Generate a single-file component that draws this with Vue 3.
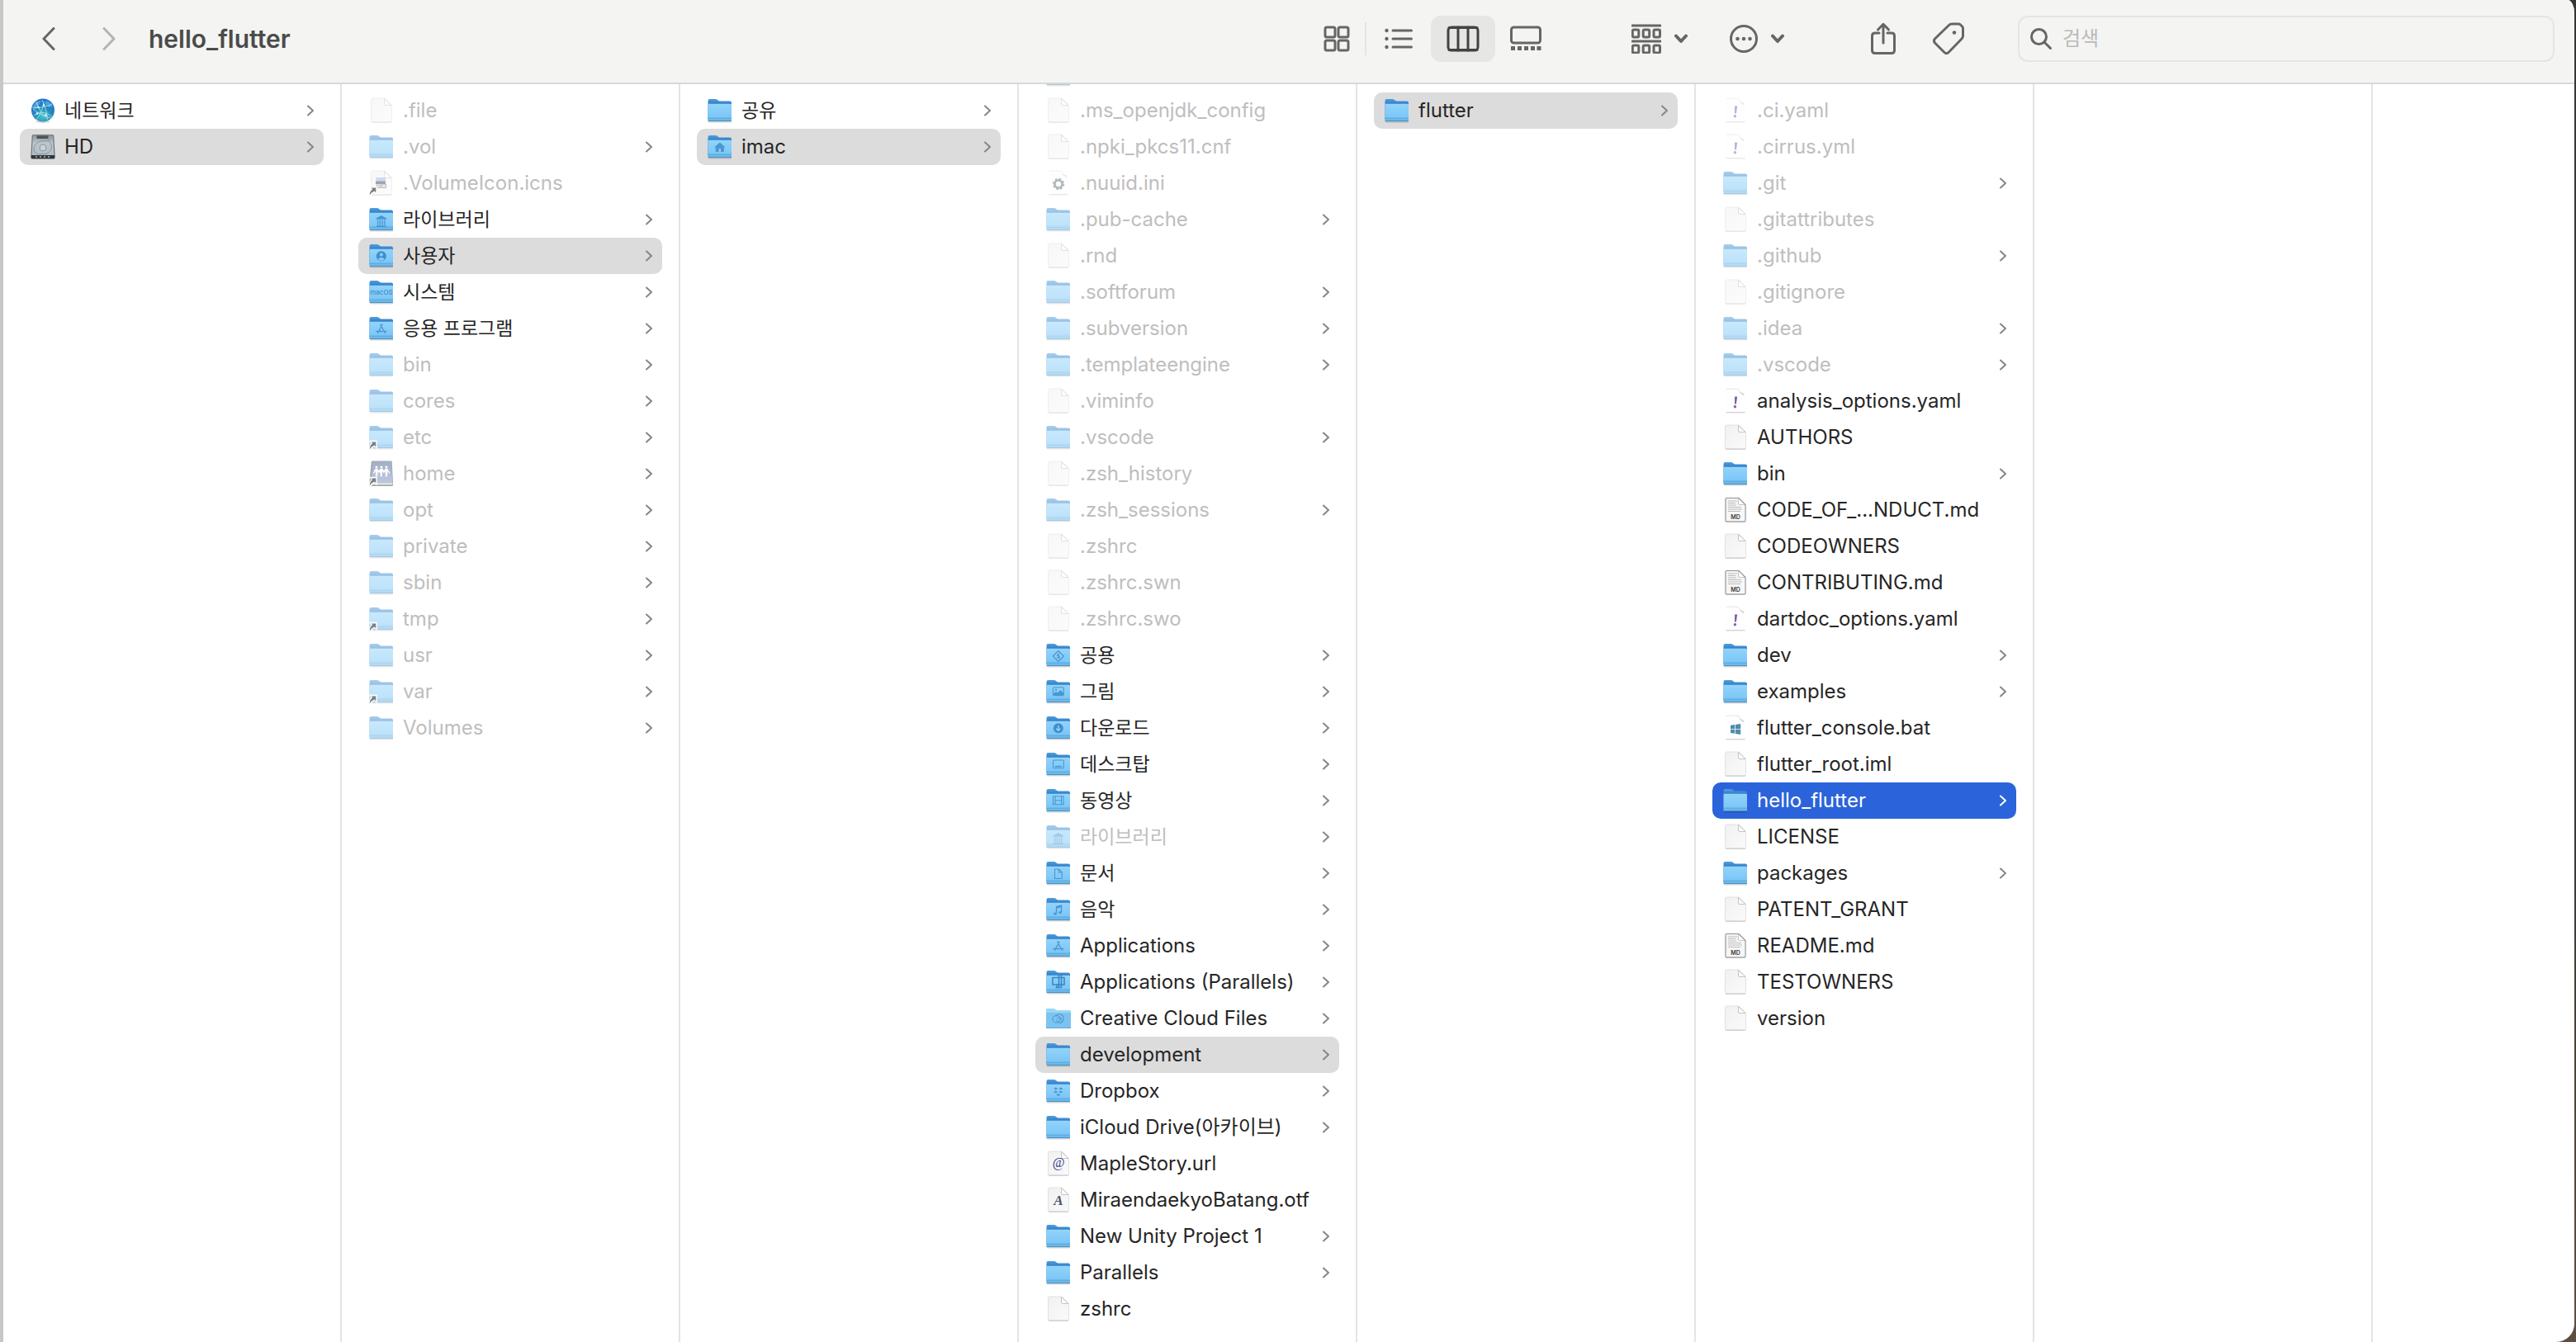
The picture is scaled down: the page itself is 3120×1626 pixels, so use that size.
<script setup>
const f = (name, extra = {}) => ({ name, icon: 'folder', nav: true, ...extra })
const d = (name, extra = {}) => ({ name, icon: 'doc', ...extra })
const dim = { dim: true }

const columns = [
  {
    items: [
      { name: '네트워크', icon: 'globe', nav: true },
      { name: 'HD', icon: 'disk', nav: true, state: 'open' },
    ],
  },
  {
    items: [
      d('.file', dim),
      f('.vol', dim),
      d('.VolumeIcon.icns', { dim: true, glyph: 'picture', alias: true }),
      f('라이브러리', { glyph: 'library' }),
      f('사용자', { glyph: 'user', state: 'open' }),
      f('시스템', { mark: 'macos' }),
      f('응용 프로그램', { glyph: 'apps' }),
      f('bin', dim),
      f('cores', dim),
      f('etc', { dim: true, alias: true }),
      { name: 'home', icon: 'server', nav: true, dim: true, alias: true },
      f('opt', dim),
      f('private', dim),
      f('sbin', dim),
      f('tmp', { dim: true, alias: true }),
      f('usr', dim),
      f('var', { dim: true, alias: true }),
      f('Volumes', dim),
    ],
  },
  {
    items: [f('공유'), f('imac', { glyph: 'house', state: 'open' })],
  },
  {
    scrolled: true,
    items: [
      f('', dim),
      d('.ms_openjdk_config', dim),
      d('.npki_pkcs11.cnf', dim),
      { name: '.nuuid.ini', icon: 'page', glyph: 'gear', dim: true },
      f('.pub-cache', dim),
      d('.rnd', dim),
      f('.softforum', dim),
      f('.subversion', dim),
      f('.templateengine', dim),
      d('.viminfo', dim),
      f('.vscode', dim),
      d('.zsh_history', dim),
      f('.zsh_sessions', dim),
      d('.zshrc', dim),
      d('.zshrc.swn', dim),
      d('.zshrc.swo', dim),
      f('공용', { glyph: 'public' }),
      f('그림', { glyph: 'pictures' }),
      f('다운로드', { glyph: 'download' }),
      f('데스크탑', { glyph: 'desktop' }),
      f('동영상', { glyph: 'movie' }),
      f('라이브러리', { glyph: 'library', dim: true }),
      f('문서', { glyph: 'document' }),
      f('음악', { glyph: 'music' }),
      f('Applications', { glyph: 'apps' }),
      f('Applications (Parallels)', { glyph: 'parallels' }),
      f('Creative Cloud Files', { icon: 'folderflat', glyph: 'cloud' }),
      f('development', { state: 'open' }),
      f('Dropbox', { glyph: 'dropbox' }),
      f('iCloud Drive(아카이브)'),
      d('MapleStory.url', { mark: 'at' }),
      d('MiraendaekyoBatang.otf', { mark: 'font' }),
      f('New Unity Project 1'),
      f('Parallels'),
      d('zshrc'),
    ],
  },
  { items: [f('flutter', { state: 'open' })] },
  {
    items: [
      { name: '.ci.yaml', icon: 'page', glyph: 'bang', dim: true },
      { name: '.cirrus.yml', icon: 'page', glyph: 'bang', dim: true },
      f('.git', dim),
      d('.gitattributes', dim),
      f('.github', dim),
      d('.gitignore', dim),
      f('.idea', dim),
      f('.vscode', dim),
      { name: 'analysis_options.yaml', icon: 'page', glyph: 'bang' },
      d('AUTHORS'),
      f('bin'),
      d('CODE_OF_...NDUCT.md', { glyph: 'md', mark: 'md' }),
      d('CODEOWNERS'),
      d('CONTRIBUTING.md', { glyph: 'md', mark: 'md' }),
      { name: 'dartdoc_options.yaml', icon: 'page', glyph: 'bang' },
      f('dev'),
      f('examples'),
      { name: 'flutter_console.bat', icon: 'page', glyph: 'windows' },
      d('flutter_root.iml'),
      f('hello_flutter', { state: 'selected' }),
      d('LICENSE'),
      f('packages'),
      d('PATENT_GRANT'),
      d('README.md', { glyph: 'md', mark: 'md' }),
      d('TESTOWNERS'),
      d('version'),
    ],
  },
  { items: [] },
  { items: [] },
]

// Short lettering printed on some of the file icons.
const marks = {
  macos: { text: 'macOS', y: 19 },
  at: { text: '@', y: 20 },
  font: { text: 'A', y: 22 },
  md: { text: 'MD', y: 27 },
}

const isHangul = (name) => /^[가-힣 ]+$/.test(name)
</script>

<template>
  <svg class="sprite" aria-hidden="true">
    <defs>
      <linearGradient id="g-front" x1="0" y1="0" x2="0" y2="1">
        <stop offset="0" stop-color="#92d3fb" /><stop offset=".75" stop-color="#7cc7f7" /><stop offset="1" stop-color="#62afe2" />
      </linearGradient>
      <linearGradient id="g-back" x1="0" y1="0" x2="0" y2="1">
        <stop offset="0" stop-color="#4f9fdc" /><stop offset=".28" stop-color="#2c78c4" /><stop offset="1" stop-color="#2c78c4" />
      </linearGradient>
      <linearGradient id="g-paper" x1="0" y1="0" x2="1" y2="1">
        <stop offset="0" stop-color="#f1f1f1" /><stop offset="1" stop-color="#fafafa" />
      </linearGradient>
      <radialGradient id="g-globe" cx=".5" cy=".75" r=".75">
        <stop offset="0" stop-color="#4dc4c6" /><stop offset=".5" stop-color="#2388bb" /><stop offset="1" stop-color="#2470d0" />
      </radialGradient>
      <linearGradient id="g-disk" x1="0" y1="0" x2="0" y2="1">
        <stop offset="0" stop-color="#8d9498" /><stop offset=".4" stop-color="#bcc6cc" /><stop offset="1" stop-color="#b3bec5" />
      </linearGradient>
      <linearGradient id="g-server" x1="0" y1="0" x2="0" y2="1">
        <stop offset="0" stop-color="#48608a" /><stop offset="1" stop-color="#7590c4" />
      </linearGradient>
    </defs>

    <symbol id="i-folder" viewBox="0 0 32 32">
      <path d="M2 28.500h28v1a1 1 0 0 1-1 1H3a1 1 0 0 1-1-1z" fill="#000" opacity=".16" />
      <path d="M1.500 4q0-2 2-2h7q1.500 0 2.500 1t2.500 1.500h12.500q2 0 2 2V27h-28.500z" fill="url(#g-back)" />
      <path d="M1.500 9q0-1.200 1.200-1.200h26.100q1.200 0 1.200 1.200v18.500q0 1.500-1.500 1.500H3q-1.500 0-1.500-1.500z" fill="url(#g-front)" />
      <path d="M1.500 25.200h28.500" stroke="#4f9fd4" stroke-width=".8" />
      <path d="M1.500 28.600h28.500" stroke="#458dc0" stroke-width=".9" />
    </symbol>
    <symbol id="i-folderflat" viewBox="0 0 32 32">
      <path d="M1 5q0-1 1-1h8q1 0 2 1t2 1h16q1 0 1 1v20q0 1-1 1H2q-1 0-1-1z" fill="#9ad6f7" />
      <path d="M1 9h30v18q0 1-1 1H2q-1 0-1-1z" fill="#7cc4f0" />
      <path d="M1 27.500h30" stroke="#5aa6d6" />
    </symbol>
    <symbol id="i-doc" viewBox="0 0 32 32">
      <path d="M3.500 3q0-2 2-2h14.500l8.500 8.500v19q0 2-2 2h-21q-2 0-2-2z" fill="url(#g-paper)" stroke="#dadada" stroke-width=".8" />
      <path d="M4 30h24" stroke="#c4c4c4" stroke-width="1" />
      <path d="M19.500 1.500l8.500 8h-7q-1.500 0-1.500-1.500z" fill="#fff" stroke="#bdbdbd" stroke-width=".9" />
    </symbol>
    <symbol id="i-page" viewBox="0 0 32 32">
      <path d="M4.500 1.500h14l9 9v19h-23z" fill="#fefefe" />
      <path d="M5 1.200h13q2 0 3 2.500t3.500 3l2 2" fill="none" stroke="#e2e2e2" stroke-width="1" />
      <path d="M20 5l6.500 4.500-1-3z" fill="#cfcfcf" />
      <path d="M4.500 29.800h23" stroke="#c4c4c4" stroke-width="1" />
    </symbol>
    <symbol id="i-globe" viewBox="0 0 32 32">
      <ellipse cx="16" cy="29.500" rx="9" ry="1.500" fill="#000" opacity=".16" />
      <circle cx="16" cy="15.500" r="14" fill="url(#g-globe)" />
      <path d="M5 8q4-4 9-4l-3 5-3 5-4 1zM20 4q5 1 8 7l-5 1-5-4z" fill="#7cc7ee" opacity=".5" />
      <g fill="none" stroke="#a9e6ee" stroke-width=".8">
        <path d="M3 12q13 2 24-4M5 22q11-8 22 1M8 5q3 12 14 22M17 5q-1 12-9 22M4 14q9 8 22 11M15 3q5 10 7 23" />
      </g>
      <g fill="#eaffff"><circle cx="10.500" cy="12" r="1.200" /><circle cx="17" cy="9.500" r="1.200" /><circle cx="9" cy="19.500" r="1.200" /><circle cx="19.500" cy="21.500" r="1.200" /></g>
    </symbol>
    <symbol id="i-disk" viewBox="0 0 32 32">
      <path d="M4.500 1h23q1.500 0 1.800 1.500L30.500 24v5q0 1.500-1.500 1.500H3q-1.500 0-1.500-1.500v-5L2.700 2.500Q3 1 4.500 1z" fill="#6f7579" />
      <path d="M5 1.800h22q1 0 1.200 1L29.400 26H2.600L3.800 2.800Q4 1.800 5 1.800z" fill="url(#g-disk)" />
      <path d="M8.500 2.500h14v3.500h-14z" fill="#4d5356" />
      <path d="M24 5.500q2 1.500-1 3-5 0-9 .5-9 2-9 10 .5 5 5 5.500h9q7-2 7.500-8.500 0-5-3.500-7" fill="none" stroke="#8a969d" stroke-width="1" />
      <circle cx="16" cy="17" r="4" fill="#c9d3d9" stroke="#84919a" stroke-width=".9" />
      <path d="M1.700 26h28.600v3q0 1.300-1.300 1.300H3q-1.300 0-1.300-1.300z" fill="#33383b" />
      <path d="M7 28h17" stroke="#8d9599" stroke-width="2" stroke-dasharray="2 3" />
    </symbol>
    <symbol id="i-server" viewBox="0 0 32 32">
      <path d="M5 .5h22.500q1 0 1.200 1L30 27v3q0 1-1 1H3q-1.500 0-1.500-1.500V26L3.800 1.500Q4 .5 5 .5z" fill="#3c4a66" />
      <path d="M4 26.500h25.500v3H4z" fill="#c9c5b8" />
      <path d="M5.500 1h21.500q.8 0 .9.800L29.300 26H4.500L3.500 26 5 2z" fill="url(#g-server)" />
      <g fill="#fff">
        <circle cx="10" cy="8" r="1.500" /><circle cx="16" cy="8" r="1.500" /><circle cx="22" cy="8" r="1.500" />
        <path d="M8.500 10h3l1.500 2.500 1.500-2.500h3l1.500 2.500 1.500-2.500h3l3 5.500-.8.500-2.400-3v6.500h-1.100v-3.500h-.4v3.500h-1.100V13l-1.800 2.500-1.900-2.500v6.500h-1.100v-3.500h-.4v3.500h-1.100V13L13 15.500 11.500 13v6.500h-1.100v-3.500H10v3.500H8.900V13l-2.400 3-.8-.5z" />
      </g>
    </symbol>

    <symbol id="q-library" viewBox="0 0 32 32"><g fill="#4a96d0"><path d="M9.500 14.500L15.800 11l6.300 3.500v1.300H9.500zM10 23.300h11.600V25H10z" /><path d="M11 16.500h1.300v6.200H11zM13.700 16.500H15v6.200h-1.300zM16.500 16.500h1.300v6.200h-1.300zM19.200 16.500h1.300v6.200h-1.300z" /></g></symbol>
    <symbol id="q-user" viewBox="0 0 32 32"><circle cx="15.800" cy="16.300" r="6" fill="#3f8ecb" /><circle cx="15.800" cy="14.600" r="2.100" fill="#8acdf8" /><path d="M11.800 20q4-4 8 0-4 3.500-8 0z" fill="#8acdf8" /></symbol>
    <symbol id="q-apps" viewBox="0 0 32 32"><path d="M17 11l-5.500 10.500M14.700 11l5.500 10.500M9.800 19.500h7.500M19 19.500h2.800" fill="none" stroke="#4a96d0" stroke-width="1.300" stroke-linecap="round" /></symbol>
    <symbol id="q-house" viewBox="0 0 32 32"><path d="M15.800 10.500l6.700 6h-1.700v5.500h-10v-5.500H9.100z" fill="#4a96d0" /><path d="M14.600 18h2.400v4h-2.400z" fill="#8acdf8" /></symbol>
    <symbol id="q-public" viewBox="0 0 32 32"><path d="M15.800 10.500l6.500 6.500-6.500 6.500L9.300 17z" fill="none" stroke="#4a96d0" stroke-width="1.100" stroke-linejoin="round" /><path d="M16.200 13v1.500M14 16.500l2-1.500.5 2.500 1.500 1M16 17.500L14.500 20M16.500 17.500l1 2.500" fill="none" stroke="#4a96d0" stroke-width="1.100" /></symbol>
    <symbol id="q-pictures" viewBox="0 0 32 32"><rect x="9.500" y="10.800" width="12.800" height="9.800" rx="1.200" fill="none" stroke="#4a96d0" stroke-width="1.100" /><circle cx="13" cy="13.600" r="1.200" fill="#4a96d0" /><path d="M10 20v-1.500l3-2.500 2 1.500 3.500-3.500 3.500 3.500V20z" fill="#4a96d0" /></symbol>
    <symbol id="q-download" viewBox="0 0 32 32"><circle cx="15.800" cy="16.300" r="6" fill="#3f8ecb" /><path d="M15.800 13v6M13.200 16.700l2.600 2.600 2.600-2.600" fill="none" stroke="#9ad6fb" stroke-width="1.300" /></symbol>
    <symbol id="q-desktop" viewBox="0 0 32 32"><rect x="9.500" y="11" width="12.800" height="9.800" rx="1.200" fill="none" stroke="#4a96d0" stroke-width="1.100" /><path d="M12 18.600h7.800" stroke="#4a96d0" stroke-width="1.700" /></symbol>
    <symbol id="q-movie" viewBox="0 0 32 32"><path d="M9.500 10.800h12.600v10H9.500zM12 10.800v10M19.600 10.800v10M12 15.800h7.600" fill="none" stroke="#4a96d0" stroke-width="1.100" /></symbol>
    <symbol id="q-document" viewBox="0 0 32 32"><path d="M11.500 11h4.800l4 4v7.500h-8.800zM16.300 11v4h4" fill="none" stroke="#4a96d0" stroke-width="1.100" stroke-linejoin="round" /></symbol>
    <symbol id="q-music" viewBox="0 0 32 32"><path d="M13.500 21v-8.500l6-1.500v8.500M13.500 14l6-1.500" fill="none" stroke="#4a96d0" stroke-width="1.300" /><ellipse cx="12" cy="21" rx="1.900" ry="1.500" fill="#4a96d0" /><ellipse cx="18" cy="19.600" rx="1.900" ry="1.500" fill="#4a96d0" /></symbol>
    <symbol id="q-parallels" viewBox="0 0 32 32"><path d="M9 10.500h14v8.500H9zM12.500 22.500h7M16.500 7v15.500M19.500 7v15.500M14 19v3" fill="none" stroke="#3a87c4" stroke-width="1.600" /></symbol>
    <symbol id="q-cloud" viewBox="0 0 32 32"><rect x="9" y="12.500" width="9" height="8.500" rx="4.200" fill="none" stroke="#4a96d0" /><path d="M12.500 13.500q2.500-3.500 6-2.500 4.500 1.500 3.500 6.500-1 4-5 3.800l-3.500-3" fill="none" stroke="#4a96d0" stroke-width="1.100" /><path d="M14 16.500q3-3 5-1.200 1.500 2-.5 3.700" fill="none" stroke="#4a96d0" /></symbol>
    <symbol id="q-dropbox" viewBox="0 0 32 32"><path d="M12.700 11.500l2.500 1.500-2.500 1.500-2.500-1.500zM18.900 11.500l2.500 1.500-2.500 1.500-2.500-1.500zM12.700 15.500l2.500 1.500-2.500 1.500-2.500-1.500zM18.900 15.500l2.500 1.500-2.500 1.500-2.500-1.500zM15.800 18.900l2.500 1.500-2.500 1.500-2.500-1.500z" fill="#4a96d0" /></symbol>
    <symbol id="q-picture" viewBox="0 0 32 32"><path d="M9.500 9h11.500v8H9.500z" fill="#9fb4ea" /><path d="M9 13.500h12v3.500H9z" fill="#434a60" /><path d="M16 17h5.500v4.500H16zM10 18h5v3.500h-5z" fill="#cfcfcf" stroke="#666" stroke-width=".8" /></symbol>
    <symbol id="q-gear" viewBox="0 0 32 32"><circle cx="16" cy="17" r="4.600" fill="none" stroke="#657379" stroke-width="2.800" /><circle cx="16" cy="17" r="6.400" fill="none" stroke="#657379" stroke-width="1.600" stroke-dasharray="2.510 2.510" /></symbol>
    <symbol id="q-bang" viewBox="0 0 32 32"><path d="M15 10.500h3.200l-1.300 9h-1.900z" fill="#8460ae" /><circle cx="15.400" cy="22.800" r="1.700" fill="#8460ae" /></symbol>
    <symbol id="q-windows" viewBox="0 0 32 32"><path d="M10 12.800l5-.8v5h-5zM15.800 11.900l6.400-1v6.100h-6.400zM10 17.800h5v5l-5-.8zM15.800 17.800h6.400v6.100l-6.400-1z" fill="#4c8dae" /></symbol>
    <symbol id="q-md" viewBox="0 0 32 32">
      <path d="M4 3q0-1.500 1.500-1.500h14.500l8 8v19q0 1.500-1.500 1.500h-21q-1.500 0-1.500-1.500z" fill="none" stroke="#9a9a9a" stroke-width="1.100" />
      <path d="M7 5h11M7 7.500h9M7 10h10M7 12.500h16M7 15h17M7 17.500h15" stroke="#bdbdbd" stroke-width="1" />
    </symbol>
    <symbol id="q-alias" viewBox="0 0 32 32">
      <path d="M2.500 20.500h7.500v8l-2.500-2.300q-3 1.500-5.500 5.300H.8q.2-5 4-8.500z" fill="#fff" stroke="#fff" stroke-width="1.500" />
      <path d="M3.500 21.500H9.300v5.800l-2-1.800q-3.300 1.500-5.500 5-.3-4.500 3.500-7.200z" fill="#7e7e7e" />
    </symbol>
  </svg>

  <main class="window">
    <header class="toolbar">
      <nav class="history">
        <button class="tool" aria-label="뒤로"><svg width="16" height="28" viewBox="0 0 16 28"><path d="M14 1.500L2 14l12 12.500" /></svg></button>
        <button class="tool faint" aria-label="앞으로"><svg width="16" height="28" viewBox="0 0 16 28"><path d="M2 1.500L14 14 2 26.500" /></svg></button>
      </nav>
      <h1>hello_flutter</h1>

      <div class="views">
        <button class="view first" aria-label="아이콘">
          <svg width="32" height="32" viewBox="0 0 32 32"><rect x="2" y="2" width="12" height="12" rx="2" /><rect x="18" y="2" width="12" height="12" rx="2" /><rect x="2" y="18" width="12" height="12" rx="2" /><rect x="18" y="18" width="12" height="12" rx="2" /></svg>
        </button>
        <button class="view" aria-label="목록">
          <svg width="34" height="32" viewBox="0 0 34 32"><path d="M10 6h22.500M10 16h22.500M10 26h22.500" /><g class="solid"><circle cx="2.500" cy="6" r="2.200" /><circle cx="2.500" cy="16" r="2.200" /><circle cx="2.500" cy="26" r="2.200" /></g></svg>
        </button>
        <button class="view active" aria-label="계층">
          <svg width="40" height="32" viewBox="0 0 40 32"><rect x="2" y="2" width="36" height="28" rx="4" /><path d="M14 2v28M26 2v28M3 2.500h34M3 29.500h34" /></svg>
        </button>
        <button class="view last" aria-label="갤러리">
          <svg width="38" height="32" viewBox="0 0 38 32"><rect x="1.500" y="2" width="35" height="19" rx="3" /><g class="solid"><rect x="1" y="25" width="5" height="5" /><rect x="9" y="25" width="5" height="5" /><rect x="17" y="25" width="5" height="5" /><rect x="25" y="25" width="5" height="5" /><rect x="32.500" y="25" width="5" height="5" /></g></svg>
        </button>
      </div>

      <div class="menus">
        <button class="tool" aria-label="그룹">
          <svg width="36" height="36" viewBox="0 0 36 36"><path d="M1 2h34M1 21h34" /><rect x="1.300" y="7" width="7.500" height="9" rx="1.500" /><rect x="14.200" y="7" width="7.500" height="9" rx="1.500" /><rect x="27" y="7" width="7.500" height="9" rx="1.500" /><rect x="1.300" y="26" width="7.500" height="9" rx="1.500" /><rect x="14.200" y="26" width="7.500" height="9" rx="1.500" /><rect x="27" y="26" width="7.500" height="9" rx="1.500" /></svg>
          <svg width="16" height="12" viewBox="0 0 16 12"><path class="bold" d="M2 2.500l6 6.500 6-6.500" /></svg>
        </button>
        <button class="tool" aria-label="동작">
          <svg width="34" height="36" viewBox="0 0 34 36"><circle cx="17" cy="18" r="15.500" /><g class="solid"><circle cx="9.500" cy="18" r="2.300" /><circle cx="17" cy="18" r="2.300" /><circle cx="24.500" cy="18" r="2.300" /></g></svg>
          <svg width="16" height="12" viewBox="0 0 16 12"><path class="bold" d="M2 2.500l6 6.500 6-6.500" /></svg>
        </button>
      </div>

      <div class="actions">
        <button class="tool" aria-label="공유">
          <svg width="30" height="40" viewBox="0 0 30 40"><path d="M10 13H5q-3.500 0-3.500 3.500V34q0 3.500 3.500 3.500h20q3.500 0 3.500-3.500V16.500Q28.500 13 25 13h-5M15 25V3M8.500 9L15 2.300 21.500 9" /></svg>
        </button>
        <button class="tool" aria-label="태그">
          <svg width="38" height="40" viewBox="0 0 38 40"><path d="M19.500 3.500Q21 2 23 2h8q1.500 0 2.500 1l2 2q1 1 1 2.500v9q0 2-1.500 3.500L19 36.500q-2.500 2.500-5 0L2.500 25q-2-2.500 0-5z" /><circle class="dot" cx="26" cy="12.500" r="2.300" /></svg>
        </button>
      </div>

      <label class="search">
        <svg width="28" height="28" viewBox="0 0 28 28"><circle cx="11.500" cy="11.500" r="9" /><path d="M18.200 18.200l7.300 7.300" /></svg>
        <input type="search" placeholder="검색" aria-label="검색" />
      </label>
    </header>

    <div class="browser">
      <ul v-for="(col, c) in columns" :key="c" class="column" :class="{ scrolled: col.scrolled }">
        <li v-for="(item, i) in col.items" :key="i">
          <button class="row" :class="[item.state, { dim: item.dim }]">
            <svg class="icon" viewBox="0 0 32 32" aria-hidden="true">
              <g class="art">
                <use :href="`#i-${item.icon}`" />
                <use v-if="item.glyph" :href="`#q-${item.glyph}`" />
                <text v-if="item.mark" class="mark" :class="item.mark" x="16" :y="marks[item.mark].y">{{ marks[item.mark].text }}</text>
              </g>
              <use v-if="item.alias" href="#q-alias" />
            </svg>
            <span class="name" :class="{ hangul: isHangul(item.name) }">{{ item.name }}</span>
            <svg v-if="item.nav" class="chevron" viewBox="0 0 8 14" aria-hidden="true"><path d="M1 1.500L7 7l-6 5.500" /></svg>
          </button>
        </li>
      </ul>
    </div>
  </main>
</template>

<style>
body {
  margin: 0;
  background: linear-gradient(#383634, #3a3733 60%, #5c5042);
}
</style>

<style scoped>
.sprite {
  position: absolute;
  width: 0;
  height: 0;
}
.window {
  box-sizing: border-box;
  height: 100vh;
  margin-right: 2px;
  display: flex;
  flex-direction: column;
  overflow: hidden;
  border-left: 4px solid #c8c6c6;
  border-radius: 0 8px 22px 0 / 0 16px 22px 0;
  background: #fff;
  color: #262626;
  font-family: Inter, "Noto Sans CJK KR", sans-serif;
}
button {
  margin: 0;
  padding: 0;
  border: 0;
  background: none;
  color: inherit;
  font: inherit;
  text-align: left;
}
.toolbar {
  box-sizing: border-box;
  height: 102px;
  flex: none;
  display: flex;
  align-items: center;
  padding: 0 24px 6px 47px;
  border-bottom: 2px solid #d8d8d7;
  background: #f4f4f2;
  color: #666665;
}
.toolbar svg {
  display: block;
  flex: none;
  fill: none;
  stroke: currentColor;
  stroke-width: 3;
  stroke-linecap: round;
  stroke-linejoin: round;
}
.toolbar .solid {
  fill: currentColor;
  stroke: none;
}
.toolbar .dot {
  fill: currentColor;
  stroke: none;
}
.toolbar .bold {
  stroke-width: 4;
}
.history {
  display: flex;
  gap: 57px;
}
.tool {
  display: flex;
  align-items: center;
  gap: 16px;
}
.faint {
  color: #b4b4b3;
}
h1 {
  flex: 1;
  margin: 0 0 0 40px;
  color: #4b4b4a;
  font-size: 30px;
  line-height: 40px;
  font-weight: 600;
}
.views {
  display: flex;
  align-items: center;
}
.view {
  width: 78px;
  height: 56px;
  display: flex;
  align-items: center;
  justify-content: center;
  border-radius: 12px;
}
.view.first {
  width: 70px;
  height: 40px;
  border-right: 2px solid #e4e4e3;
  border-radius: 0;
}
.view.active {
  background: #e6e6e5;
  color: #434342;
}
.view.last {
  width: 74px;
}
.menus {
  display: flex;
  gap: 51px;
  margin-left: 91px;
}
.actions {
  display: flex;
  gap: 45px;
  margin-left: 105px;
}
.search {
  box-sizing: border-box;
  width: 650px;
  height: 56px;
  display: flex;
  align-items: center;
  gap: 12px;
  margin-left: 65px;
  padding: 0 12px;
  border: 2px solid #e5e5e3;
  border-radius: 12px;
}
.search input {
  flex: 1;
  min-width: 0;
  padding: 0;
  border: 0;
  outline: 0;
  background: none;
  font-family: inherit;
  font-size: 24px;
  line-height: 36px;
}
.search input::placeholder {
  color: #bababa;
}
.browser {
  flex: 1;
  min-height: 0;
  display: flex;
}
.column {
  box-sizing: border-box;
  width: 410px;
  flex: none;
  margin: 0;
  padding: 10px 20px;
  overflow: hidden;
  border-right: 2px solid #e4e4e4;
  list-style: none;
}
.column:last-child {
  flex: 1;
  border-right: 0;
}
.column.scrolled {
  display: flex;
  flex-direction: column;
  justify-content: flex-end;
  padding-bottom: 18px;
}
.row {
  box-sizing: border-box;
  width: 100%;
  height: 44px;
  display: flex;
  align-items: center;
  padding: 0 12px;
  border-radius: 10px;
}
.row.open {
  background: #dcdcdc;
}
.row.selected {
  background: #2b64da;
  color: #fff;
}
.icon {
  width: 32px;
  height: 32px;
  flex: none;
  overflow: visible;
}
.mark {
  text-anchor: middle;
}
.mark.macos {
  fill: #3f8ecb;
  font-size: 8px;
  font-weight: 500;
}
.mark.at {
  fill: #333d8e;
  font-family: "Liberation Serif", serif;
  font-size: 16px;
}
.mark.font {
  fill: #4b5668;
  font-family: "Liberation Serif", serif;
  font-size: 17px;
  font-style: italic;
  font-weight: 700;
}
.mark.md {
  fill: #3a3a3a;
  font-size: 7px;
  font-weight: 600;
}
.name {
  flex: 1;
  min-width: 0;
  margin-left: 10px;
  font-size: 24px;
  line-height: 44px;
  white-space: nowrap;
}
.name.hangul {
  font-size: 23px;
}
.dim .name {
  color: #bebebe;
}
.dim .art {
  opacity: 0.5;
}
.chevron {
  width: 8px;
  height: 14px;
  flex: none;
  fill: none;
  stroke: #868686;
  stroke-width: 2;
  stroke-linecap: round;
  stroke-linejoin: round;
}
.selected .chevron {
  stroke: #fff;
}
</style>
